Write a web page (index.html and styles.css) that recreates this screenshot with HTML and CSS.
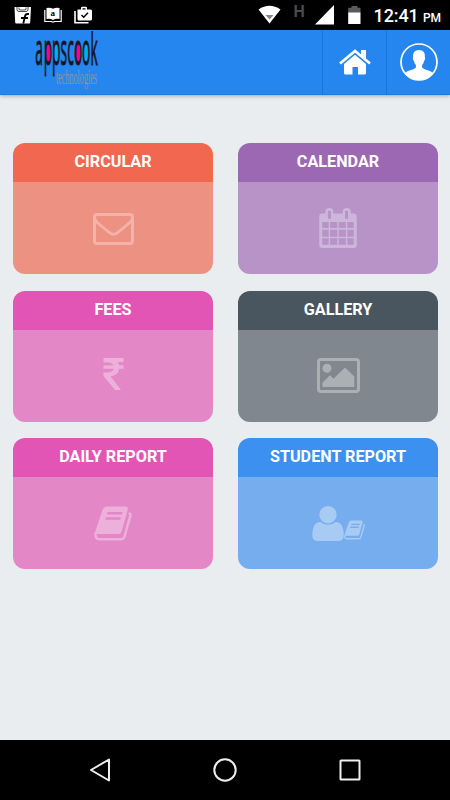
FILE: index.html
```
<!DOCTYPE html>
<html lang="en">
<head>
    <meta charset="UTF-8">
    <meta name="viewport" content="width=device-width, initial-scale=1.0">
    <title>Appscook</title>
    <link rel="stylesheet" href="styles.css">
</head>
<body>
    <svg class="symbols">
        <symbol id="book" viewBox="0 0 38 35">
            <path fill="currentColor" fill-rule="evenodd" d="M12.500 .5h18.500q3.600 0 2.600 3.500l-6 21.500q-.8 2.500-3.200 2.500h-21.400q-2.400 0-1.600-3l6.600-19.500q1.500-5 4.500-5zM13.700 6l-.8 2.500h15l.8-2.500zM12 11.300l-.8 2.500h15l.8-2.500z"/>
            <path fill="none" stroke="currentColor" stroke-width="2.500" d="M36 7.500q.7 1 .3 2.500l-5.800 20.500q-.8 2.800-3.500 2.800h-21.500q-4.700 0-4-6.800M35 8.500l1.500-1.500"/>
        </symbol>
    </svg>

    <div class="statusbar">
        <div class="notifications">
            <svg width="18" height="18" viewBox="0 0 18 18">
                <path fill="#fff" d="M.5 1h16.500l-.8 15.500q0 1-1 1h-13q-1 0-1-1z"/>
                <path fill="none" stroke="#000" stroke-width=".7" d="M3 1v2.500q0 2 2 2h7q2 0 2-2v-2.500M5 1.500v1.500q0 1 1 1h5q1 0 1-1v-1.500"/>
                <path fill="none" stroke="#000" stroke-width="1.800" d="M15 8h-1.500q-2 0-2.600 2.500l-1.600 7M7 12h7"/>
            </svg>
            <svg width="18" height="17" viewBox="0 0 18 17">
                <path fill="#fff" d="M2.500 2q3.500-1 6.500.8q3-1.800 6.500-.8v11q-3.500-1-6.500 1q-3-2-6.500-1z"/>
                <path fill="none" stroke="#fff" stroke-width="1.200" d="M.8 4v11.500h6.500q1.700 1 3.400 0h6.500v-11.500"/>
                <text class="book-letter" x="6.500" y="9.500">a</text>
            </svg>
            <svg width="19" height="18" viewBox="0 0 19 18">
                <path fill="none" stroke="#fff" stroke-width="1.600" d="M1 5v11.700h13.500"/>
                <path fill="#fff" fill-rule="evenodd" d="M3.500 3.500h3.500v-1.500q0-1.200 1.200-1.200h3.600q1.200 0 1.200 1.200v1.500h3.500q1.500 0 1.500 1.500v8q0 1.500-1.500 1.500h-11.500q-1.500 0-1.500-1.500zM8.500 3.500h3v-1.200h-3z"/>
                <path fill="none" stroke="#000" stroke-width="1.500" d="M7.500 9l2.200 2.200l4.300-4.500"/>
            </svg>
        </div>
        <div class="system">
            <svg width="24" height="20" viewBox="0 0 24 20">
                <path fill="#fff" d="M.5 4.500q11-7.500 22 0l-11 14z"/>
                <path fill="#888" d="M7.500 10h8l-4 4.500z"/>
            </svg>
            <span class="network">H</span>
            <svg class="signal" width="20" height="20" viewBox="0 0 20 20"><path fill="#fff" d="M19 0v19.500h-19z"/></svg>
            <svg class="battery" width="13" height="19" viewBox="0 0 13 19">
                <path fill="#5a5a5a" d="M3.500 0h6v1.700h3v5.300h-12.300v-5.300h3.300z"/>
                <path fill="#fff" d="M.2 6.500h12.300v11.500h-12.300z"/>
            </svg>
            <span class="clock">12:41 <small>PM</small></span>
        </div>
    </div>

    <header class="header">
        <div class="logo">
            <svg width="66" height="62" viewBox="0 0 66 62">
                <ellipse cx="13.300" cy="23" rx="3" ry="9.500" fill="#f4068c"/>
                <ellipse cx="21.700" cy="23" rx="3" ry="9.500" fill="#00aeef"/>
                <ellipse cx="42.700" cy="23" rx="3" ry="9.500" fill="#f4068c"/>
                <ellipse cx="50.800" cy="23" rx="3" ry="9.500" fill="#00aeef"/>
                <text class="logo-name" transform="scale(.32 1)" x="0.600 27.500 53.400 79.700 100.600 121.600 146.600 173.400" y="34.500">appscook</text>
                <text class="logo-sub" transform="scale(.5 1)" x="42" y="54.500" textLength="82" lengthAdjust="spacingAndGlyphs">technologies</text>
            </svg>
        </div>
        <a class="header-button home">
            <svg width="32" height="27" viewBox="0 0 32 27">
                <path fill="none" stroke="#fff" stroke-width="2.700" d="M1 14.500l15-12.500l15 12.500"/>
                <path fill="#fff" d="M22 1h5v9l-5-4.200zM5 15l11-9.300l11 9.300v9q0 1.500-1.500 1.500h-6.500v-7.500h-5.500v7.500h-7q-1.500 0-1.500-1.500z"/>
            </svg>
        </a>
        <a class="header-button profile">
            <svg width="38" height="38" viewBox="0 0 38 38">
                <circle cx="19" cy="19" r="18" fill="none" stroke="#fff" stroke-width="1.700"/>
                <path fill="#fff" d="M19 7c-4.500 0-6.300 3-5.800 7c-.8.5-.2 3.300.8 4c.3 2 1 3 1.900 4v2.500c-2 2.500-7 2.200-11.200 5.500q5 7 14.300 7t14.300-7c-4.200-3.300-9.200-3-11.200-5.500v-2.500c.9-1 1.600-2 1.900-4c1-.7 1.600-3.500.8-4c.5-4-1.300-7-5.800-7z"/>
            </svg>
        </a>
    </header>

    <main class="menu">
        <a class="card circular">
            <h2>CIRCULAR</h2>
            <div class="card-body">
                <svg width="41" height="32" viewBox="0 0 41 32">
                    <rect x="1.500" y="1.500" width="38" height="29" rx="2.500" fill="none" stroke="currentColor" stroke-width="3"/>
                    <path fill="none" stroke="currentColor" stroke-width="2.800" d="M2 6q1 3 4 5l9 7.500q3 2.800 5.500 2.800t5.500-2.800l9-7.500q3-2 4-5"/>
                </svg>
            </div>
        </a>
        <a class="card calendar">
            <h2>CALENDAR</h2>
            <div class="card-body">
                <svg width="38" height="40" viewBox="0 0 37.500 40">
                    <path fill="currentColor" fill-rule="evenodd" d="M3 5.500h3v-1.500q0-4 4-4t4 4v1.500h9.500v-1.500q0-4 4-4t4 4v1.500h3q3 0 3 3v28.500q0 3-3 3h-31.500q-3 0-3-3v-28.500q0-3 3-3zM8.700 3.500v6.500q0 .8.800.8h1.400q.8 0 .8-.8v-6.500q0-.8-.8-.8h-1.400q-.8 0-.8.8zM25.800 3.500v6.500q0 .8.800.8h1.400q.8 0 .8-.8v-6.500q0-.8-.8-.8h-1.400q-.8 0-.8.8zM3 14v6h6.400v-6zM10.900 14v6h7.100v-6zM19.500 14v6h7.100v-6zM28.100 14v6h6.400v-6zM3 21.700v7h6.400v-7zM10.900 21.700v7h7.100v-7zM19.500 21.700v7h7.100v-7zM28.100 21.700v7h6.400v-7zM3 30.300v6.400h6.400v-6.400zM10.900 30.300v6.400h7.100v-6.400zM19.500 30.300v6.400h7.100v-6.400zM28.100 30.300v6.400h6.400v-6.400z"/>
                </svg>
            </div>
        </a>
        <a class="card fees">
            <h2>FEES</h2>
            <div class="card-body">
                <svg width="21" height="32" viewBox="0 0 21 32">
                    <path fill="currentColor" d="M.5 0h20v4h-6q1.200 1.300 1.600 3.200h4.400v3.500h-4.300q-1 6.700-8.700 7.700l10 12.600q.6 1-.6 1h-4.700l-11.700-14v-3.500h3.500q5.500 0 6.800-3.800h-10.300v-3.500h10q-1.500-2.700-5.700-2.700h-4.300z"/>
                </svg>
            </div>
        </a>
        <a class="card gallery">
            <h2>GALLERY</h2>
            <div class="card-body">
                <svg width="43" height="35" viewBox="0 0 43 35">
                    <rect x="1.500" y="1.500" width="40" height="32" rx="2.500" fill="none" stroke="currentColor" stroke-width="3"/>
                    <circle cx="10" cy="10.300" r="4.500" fill="currentColor"/>
                    <path fill="currentColor" d="M5.500 29v-4.500l7.500-7.300l3.500 3.500l11.500-11.200l9.300 9v10.500z"/>
                </svg>
            </div>
        </a>
        <a class="card daily">
            <h2>DAILY REPORT</h2>
            <div class="card-body">
                <svg width="38" height="35"><use href="#book"/></svg>
            </div>
        </a>
        <a class="card student">
            <h2>STUDENT REPORT</h2>
            <div class="card-body">
                <svg width="32" height="35" viewBox="0 0 32 35">
                    <circle cx="16" cy="8.700" r="8.700" fill="currentColor"/>
                    <path fill="currentColor" d="M8.500 16q3 2.700 7.500 2.700t7.500-2.700q8 0 8.300 13q0 6-6 6h-19.500q-6 0-6-6q.2-13 8.200-13z"/>
                </svg>
                <svg class="small-book" width="21" height="20"><use href="#book"/></svg>
            </div>
        </a>
    </main>

    <nav class="navbar">
        <svg width="24" height="24" viewBox="0 0 24 24"><path d="M21 1.500v21l-18-10.500z"/></svg>
        <svg width="24" height="24" viewBox="0 0 24 24"><circle cx="12" cy="12" r="10.700"/></svg>
        <svg width="24" height="24" viewBox="0 0 24 24"><rect x="2.500" y="2.500" width="19" height="19" rx=".5"/></svg>
    </nav>
</body>
</html>
```
FILE: styles.css
```
* {
    box-sizing: border-box;
}
body {
    margin: 0;
    height: 800px;
    display: flex;
    flex-direction: column;
    overflow: hidden;
    font-family: Roboto, sans-serif;
    background-color: #e9edf0;
}
svg {
    display: block;
    flex-shrink: 0;
    overflow: visible;
}
.symbols {
    position: absolute;
    width: 0;
    height: 0;
}
.statusbar {
    height: 30px;
    padding: 0 9px 0 14px;
    display: flex;
    justify-content: space-between;
    background-color: #000;
    color: #fff;
}
.notifications {
    display: flex;
    gap: 12px;
    padding-top: 6px;
}
.book-letter {
    font: bold 9px "Liberation Serif", serif;
    fill: #000;
}
.system {
    display: flex;
    padding-top: 5px;
}
.network {
    width: 11px;
    margin: -3px 10px 0 12px;
    font-size: 16px;
    font-weight: bold;
    color: #4a4a4a;
}
.battery {
    margin: 1px 13px 0 13px;
}
.clock {
    font-size: 18px;
    line-height: 21px;
    font-weight: 500;
    letter-spacing: -0.1px;
    white-space: nowrap;
}
.clock small {
    font-size: 12px;
}
.header {
    height: 65px;
    flex-shrink: 0;
    display: flex;
    background-color: #2686ef;
    border-bottom: 1px solid #1a7be6;
    box-shadow: 0 1px 4px rgba(0, 0, 0, 0.3);
}
.logo {
    flex: 1;
    padding-left: 35px;
}
.logo-name {
    font-family: "Open Sans", sans-serif;
    font-size: 43px;
    fill: #171421;
    stroke: #171421;
    stroke-width: 0.7px;
    vector-effect: non-scaling-stroke;
}
.logo-sub {
    font-family: "Liberation Serif", serif;
    font-size: 21px;
    fill: #8494b4;
}
.header-button {
    width: 64px;
    display: flex;
    align-items: center;
    justify-content: center;
    border-left: 1px solid #1a76df;
}
.menu {
    flex: 1;
    padding: 48px 12px 0 13px;
    display: grid;
    grid-template-columns: 200px 200px;
    grid-auto-rows: 131px;
    align-content: start;
    justify-content: space-between;
    row-gap: 16.500px;
}
.card {
    display: flex;
    flex-direction: column;
    border-radius: 12px;
    overflow: hidden;
}
.card h2 {
    margin: 0;
    height: 39px;
    flex-shrink: 0;
    font-size: 16.200px;
    line-height: 37px;
    font-weight: bold;
    text-align: center;
    color: #fff;
}
.card-body {
    flex: 1;
    display: flex;
    align-items: center;
    justify-content: center;
}
.circular h2 {
    background-color: #f2674f;
}
.circular .card-body {
    padding-top: 2px;
    background-color: #ed9182;
    color: #f3b3aa;
}
.calendar h2 {
    background-color: #9d68b3;
}
.calendar .card-body {
    background-color: #b793c7;
    color: #cdb6db;
}
.fees h2, .daily h2 {
    background-color: #e255b4;
}
.fees .card-body, .daily .card-body {
    background-color: #e487c6;
    color: #ecb0da;
}
.gallery h2 {
    background-color: #4a565f;
}
.gallery .card-body {
    background-color: #80878e;
    color: #abb0b5;
}
.student h2 {
    background-color: #3c90ef;
}
.student .card-body {
    background-color: #75adee;
    color: #a8cbf3;
}
.fees .card-body {
    padding-bottom: 3px;
}
.small-book {
    margin-top: 13px;
}
.navbar {
    height: 60px;
    display: flex;
    align-items: center;
    justify-content: space-between;
    padding: 0 88px;
    background-color: #000;
}
.navbar svg {
    fill: none;
    stroke: #eee;
    stroke-width: 2;
    stroke-linejoin: round;
}
```
